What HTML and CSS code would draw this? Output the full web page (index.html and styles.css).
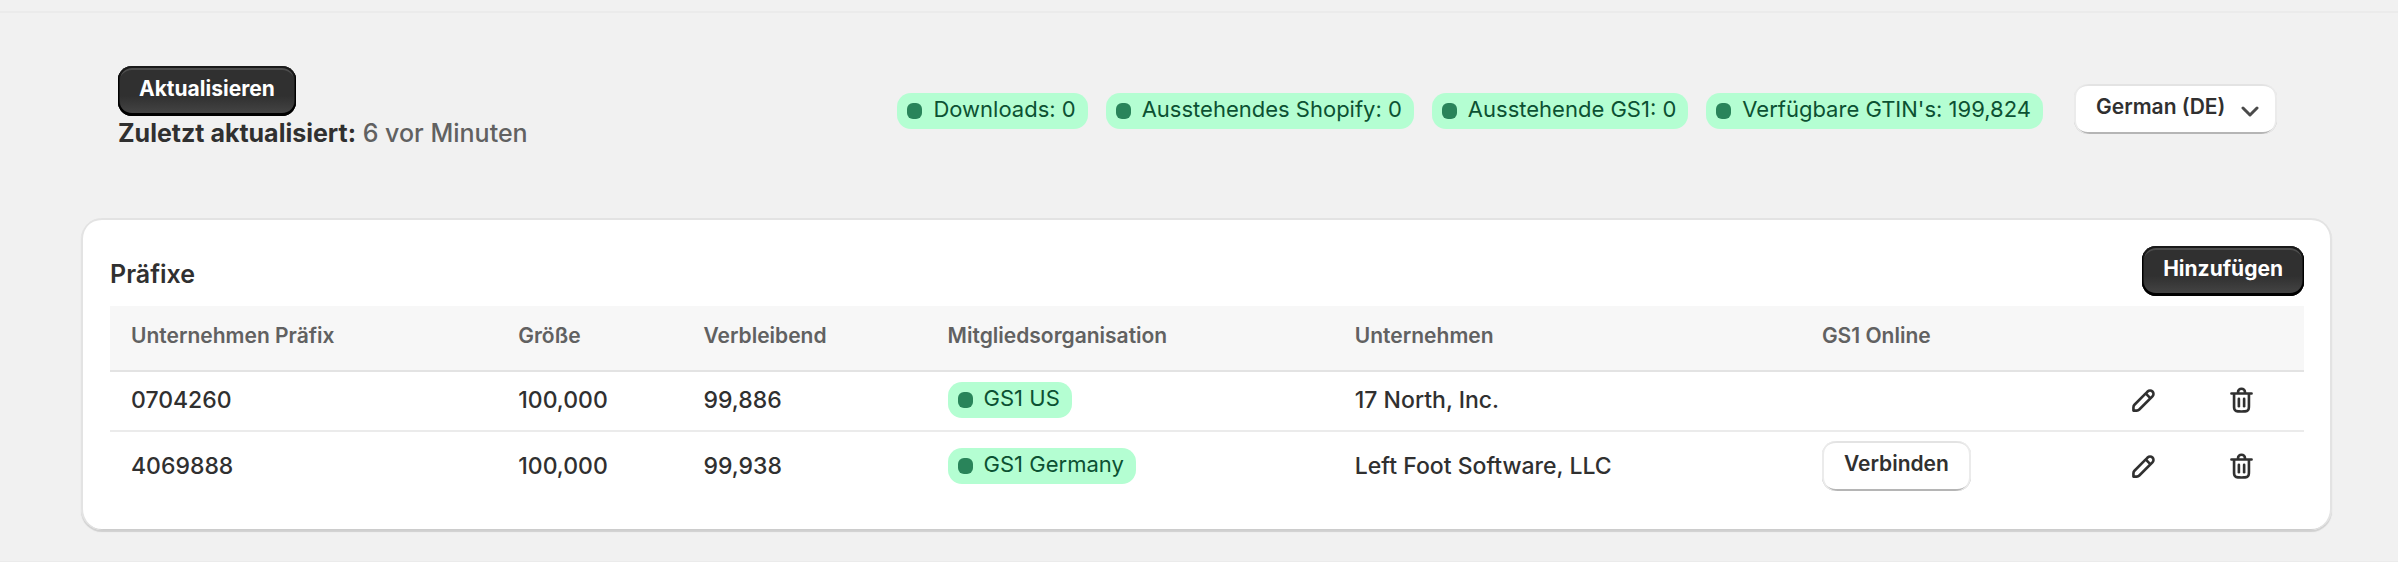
FILE: index.html
```html
<!DOCTYPE html>
<html lang="de">
<head>
<meta charset="utf-8">
<meta name="viewport" content="width=device-width, initial-scale=1">
<title>Präfixe</title>
<link rel="stylesheet" href="styles.css">
</head>
<body>
<svg class="sprite" aria-hidden="true">
  <symbol id="icon-edit" viewBox="0 0 20 20">
    <path fill-rule="evenodd" d="M15.655 4.344a2.695 2.695 0 0 0-3.81 0l-.599.599-.009-.009-1.06 1.06.008.01-5.88 5.88a2.75 2.75 0 0 0-.805 1.944v1.922a.75.75 0 0 0 .75.75h1.922a2.75 2.75 0 0 0 1.944-.806l7.54-7.539a2.695 2.695 0 0 0 0-3.81Zm-4.409 2.72-5.88 5.88a1.25 1.25 0 0 0-.366.884v1.172h1.172c.331 0 .65-.132.883-.366l5.88-5.88-1.689-1.69Zm2.75.629.599-.599a1.195 1.195 0 1 0-1.69-1.689l-.598.599 1.69 1.689Z"/>
  </symbol>
  <symbol id="icon-delete" viewBox="0 0 20 20">
    <path d="M11.5 8.25a.75.75 0 0 1 .75.75v4.25a.75.75 0 0 1-1.5 0v-4.25a.75.75 0 0 1 .75-.75Z"/>
    <path d="M9.25 9a.75.75 0 0 0-1.5 0v4.25a.75.75 0 0 0 1.5 0v-4.25Z"/>
    <path fill-rule="evenodd" d="M7.25 5.25a2.75 2.75 0 0 1 5.5 0h3a.75.75 0 0 1 0 1.5h-.75v5.45c0 1.68 0 2.52-.327 3.162a3 3 0 0 1-1.311 1.311c-.642.327-1.482.327-3.162.327h-.4c-1.68 0-2.52 0-3.162-.327a3 3 0 0 1-1.311-1.311c-.327-.642-.327-1.482-.327-3.162v-5.45h-.75a.75.75 0 0 1 0-1.5h3Zm1.5 0a1.25 1.25 0 1 1 2.5 0h-2.5Zm-2.25 1.5h7v5.45c0 .865-.001 1.423-.036 1.848-.033.408-.09.559-.128.633a1.5 1.5 0 0 1-.655.655c-.074.038-.225.095-.633.128-.425.035-.983.036-1.848.036h-.4c-.865 0-1.423-.001-1.848-.036-.408-.033-.559-.09-.633-.128a1.5 1.5 0 0 1-.656-.655c-.037-.074-.094-.225-.127-.633-.035-.425-.036-.983-.036-1.848v-5.45Z"/>
  </symbol>
</svg>
<main class="page">
  <header class="toolbar">
    <div class="status">
      <button class="btn btn-primary" type="button">Aktualisieren</button>
      <p class="updated"><strong>Zuletzt aktualisiert:</strong> 6 vor Minuten</p>
    </div>
    <div class="summary">
      <span class="badge"><span class="badge-text">Downloads: 0</span></span>
      <span class="badge"><span class="badge-text">Ausstehendes Shopify: 0</span></span>
      <span class="badge"><span class="badge-text">Ausstehende GS1: 0</span></span>
      <span class="badge"><span class="badge-text">Verfügbare GTIN's: 199,824</span></span>
      <div class="language">
        <select class="btn language-select" aria-label="Sprache">
          <option>German (DE)</option>
        </select>
        <svg class="chevron" viewBox="0 0 18 11" aria-hidden="true"><path d="M2 2l7 7 7-7"/></svg>
      </div>
    </div>
  </header>
  <section class="card">
    <div class="card-head">
      <h2 class="card-title">Präfixe</h2>
      <button class="btn btn-primary" type="button">Hinzufügen</button>
    </div>
    <table class="table">
      <colgroup>
        <col class="c-prefix"><col class="c-size"><col class="c-left"><col class="c-org"><col class="c-company"><col class="c-online"><col class="c-edit"><col class="c-delete">
      </colgroup>
      <thead>
        <tr>
          <th scope="col">Unternehmen Präfix</th>
          <th scope="col">Größe</th>
          <th scope="col">Verbleibend</th>
          <th scope="col">Mitgliedsorganisation</th>
          <th scope="col">Unternehmen</th>
          <th scope="col">GS1 Online</th>
          <td></td>
          <td></td>
        </tr>
      </thead>
      <tbody>
        <tr>
          <td>0704260</td>
          <td>100,000</td>
          <td>99,886</td>
          <td><span class="badge"><span class="badge-text">GS1 US</span></span></td>
          <td>17 North, Inc.</td>
          <td></td>
          <td><button class="icon-btn" type="button" aria-label="Bearbeiten"><svg class="icon"><use href="#icon-edit"/></svg></button></td>
          <td><button class="icon-btn" type="button" aria-label="Löschen"><svg class="icon"><use href="#icon-delete"/></svg></button></td>
        </tr>
        <tr>
          <td>4069888</td>
          <td>100,000</td>
          <td>99,938</td>
          <td><span class="badge"><span class="badge-text">GS1 Germany</span></span></td>
          <td>Left Foot Software, LLC</td>
          <td><button class="btn" type="button">Verbinden</button></td>
          <td><button class="icon-btn" type="button" aria-label="Bearbeiten"><svg class="icon"><use href="#icon-edit"/></svg></button></td>
          <td><button class="icon-btn" type="button" aria-label="Löschen"><svg class="icon"><use href="#icon-delete"/></svg></button></td>
        </tr>
      </tbody>
    </table>
  </section>
</main>
</body>
</html>
```
FILE: styles.css
```css
* {
  box-sizing: border-box;
}

body {
  margin: 0;
  padding-top: 11px;
  background: #f1f1f1;
  color: #303030;
  font-family: Inter, "Liberation Sans", sans-serif;
  font-size: 23px;
  font-weight: 450;
  line-height: 35px;
}

.sprite {
  display: none;
}

.page {
  padding: 53px 66px 31px 81px;
  border-top: 2px solid #ebebeb;
  border-bottom: 1px solid #ebebeb;
}

.toolbar {
  display: flex;
  justify-content: space-between;
  align-items: flex-start;
  padding: 0 55px 67px 37px;
}

.status {
  display: flex;
  flex-direction: column;
  align-items: flex-start;
}

.updated {
  margin: 0;
  color: #616161;
  font-size: 25px;
}

.updated strong {
  color: #303030;
  font-weight: 700;
}

.summary {
  display: flex;
  align-items: center;
  gap: 18px;
  padding-top: 18px;
}

.btn {
  display: block;
  height: 50px;
  padding: 0 22px 4px;
  border: 0;
  border-radius: 14px;
  background: #fff;
  box-shadow: inset 2px 0 0 #ebebeb, inset -2px 0 0 #ebebeb, inset 0 -2px 0 #b5b5b5, inset 0 2px 0 #e3e3e3;
  color: #303030;
  font-family: inherit;
  font-size: 21px;
  font-weight: 600;
  line-height: 28px;
}

.btn-primary {
  padding: 0 21px 4px;
  background: linear-gradient(#303030 60%, #474747);
  box-shadow: inset 0 -2px 0 1px #000, inset 0 0 0 2px #1a1a1a, inset 0 3px 0 1px #4d4d4d;
  color: #fff;
  font-weight: 650;
}

.badge {
  display: flex;
  align-items: center;
  gap: 11px;
  width: max-content;
  height: 36px;
  padding: 0 12px 0 10px;
  border-radius: 14px;
  background: #b4fed2;
  color: #0c5132;
  font-size: 22px;
  font-weight: 400;
  line-height: 28px;
}

.badge::before {
  content: "";
  width: 15px;
  height: 16px;
  border-radius: 6px;
  background: #29845a;
}

.badge-text {
  padding-bottom: 5px;
}

.language {
  display: grid;
  align-items: center;
  margin-left: 13px;
}

.language-select {
  grid-area: 1 / 1;
  padding-right: 51px;
  appearance: none;
}

.chevron {
  grid-area: 1 / 1;
  justify-self: end;
  width: 18px;
  height: 11px;
  margin: 4px 18px 0 0;
  fill: none;
  stroke: #4a4a4a;
  stroke-width: 3;
  stroke-linecap: round;
  stroke-linejoin: round;
  pointer-events: none;
}

.summary > .badge {
  margin-top: 4px;
}

.card {
  padding: 28px 28px 28px 29px;
  border-radius: 21px;
  background: #fff;
  box-shadow: inset 2px 0 0 #e3e3e3, inset -2px 0 0 #e3e3e3, inset 0 2px 0 #e3e3e3, inset 0 -1px 0 #ccc, 0 2px 1px #d0d0d0;
}

.card-head {
  display: flex;
  justify-content: space-between;
  align-items: center;
  padding-bottom: 10px;
}

.card-title {
  margin: 0;
  padding-top: 7px;
  font-size: 25px;
  font-weight: 600;
}

.table {
  width: 100%;
  border-collapse: separate;
  border-spacing: 0;
  table-layout: fixed;
}

.c-prefix { width: 17.65%; }
.c-size { width: 8.44%; }
.c-left { width: 11.13%; }
.c-org { width: 18.56%; }
.c-company { width: 21.29%; }
.c-online { width: 13.86%; }
.c-edit { width: 4.47%; }
.c-delete { width: 4.6%; }

.table th,
.table td {
  padding: 0 0 2px 21px;
  text-align: left;
  vertical-align: middle;
}

.table thead tr {
  height: 66px;
  background: #f7f7f7;
}

.table thead th,
.table thead td {
  border-bottom: 2px solid #e3e3e3;
}

.table th {
  color: #616161;
  font-size: 21px;
  font-weight: 600;
  line-height: 28px;
  padding-bottom: 4px;
}

.table tbody tr {
  height: 60px;
}

.table tbody td {
  border-bottom: 2px solid #ebebeb;
}

.table tbody tr:last-child {
  height: 70px;
}

.table tbody tr:last-child td {
  border-bottom: 0;
}

.icon-btn {
  display: block;
  padding: 0;
  border: 0;
  background: none;
  color: #303030;
}

.icon {
  display: block;
  width: 35px;
  height: 35px;
  fill: currentColor;
}
```
